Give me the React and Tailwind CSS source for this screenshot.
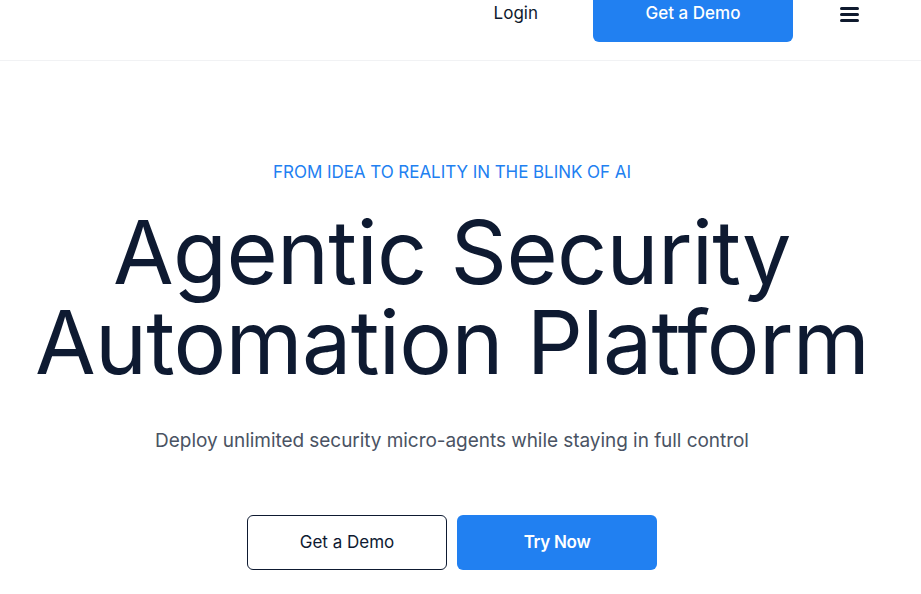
export default function App() {
  return (
    <div className="min-h-screen bg-white overflow-hidden" style={{ fontFamily: "Inter, 'Noto Sans', sans-serif" }}>
      <header className="-mt-[14px] h-[75px] border-b border-[#f1f2f4] flex items-start justify-end">
        <a className="h-[56px] flex items-center text-[17px] text-[#0f1a2e] mr-[55px]">Login</a>
        <button className="w-[200px] h-[56px] rounded-md bg-[#2180f1] text-white text-[17px] font-medium mr-[47px]">
          Get a Demo
        </button>
        <div className="h-[56px] flex items-center mr-[62px]">
          <div className="w-[19px] flex flex-col gap-[3px]">
            <span className="h-[3px] bg-[#0f1a2e] rounded-sm" />
            <span className="h-[3px] bg-[#0f1a2e] rounded-sm" />
            <span className="h-[3px] bg-[#0f1a2e] rounded-sm" />
          </div>
        </div>
      </header>

      <main className="flex flex-col items-center text-center pt-[99px] pr-[17px]">
        <p className="text-[17px] text-[#2180f1] tracking-[-0.05px]">FROM IDEA TO REALITY IN THE BLINK OF AI</p>
        <h1 className="mt-[21px] text-[88px] leading-[90px] text-[#0e1a31] tracking-[-0.7px]">
          Agentic Security
          <br />
          Automation Platform
        </h1>
        <p className="mt-[40px] text-[19px] text-[#4a5363] tracking-[-0.05px]">
          Deploy unlimited security micro-agents while staying in full control
        </p>
        <div className="mt-[60px] flex gap-[10px]">
          <button className="w-[200px] h-[55px] rounded-md border border-[#0e1a31] text-[17px] text-[#0e1a31]">
            Get a Demo
          </button>
          <button className="w-[200px] h-[55px] rounded-md bg-[#2180f1] text-[17px] font-semibold text-white tracking-[-0.3px]">
            Try Now
          </button>
        </div>
      </main>
    </div>
  );
}
